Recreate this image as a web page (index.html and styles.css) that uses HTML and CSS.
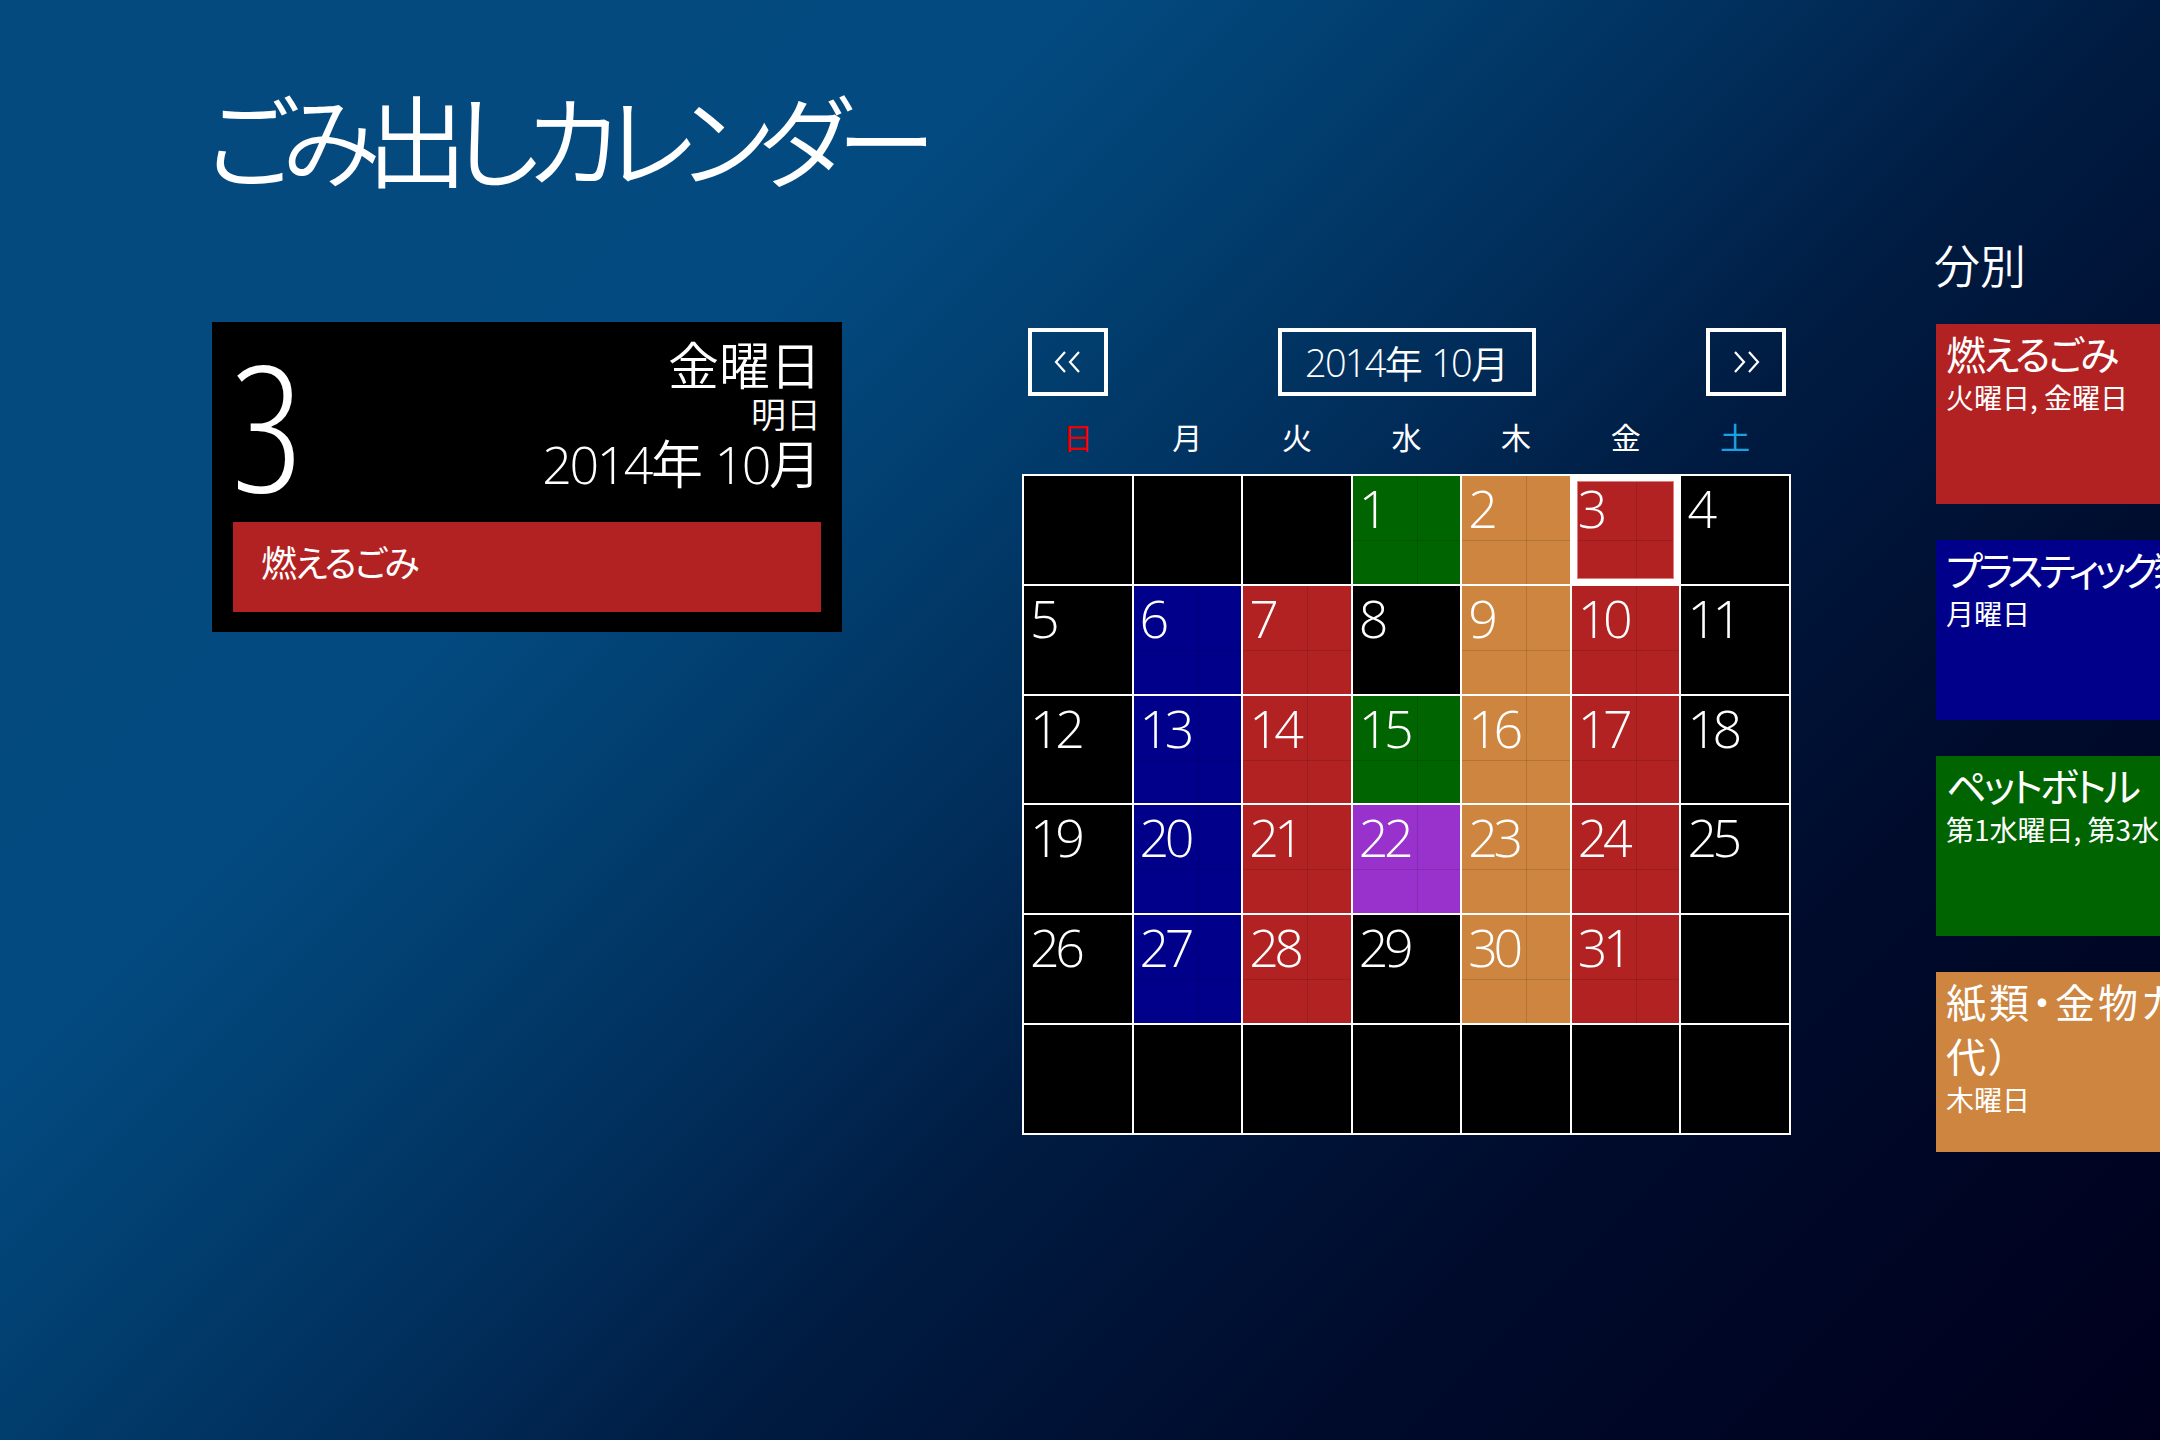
FILE: index.html
```html
<!DOCTYPE html>
<html lang="ja">
<head>
<meta charset="utf-8">
<title>ごみ出しカレンダー</title>
<link rel="stylesheet" href="styles.css">
</head>
<body>
<div class="page">
  <h1 class="title">ごみ出しカレンダー</h1>
  <div class="content">
    <section class="today-card">
      <div class="today-top">
        <div class="today-day">3</div>
        <div class="today-info">
          <div class="today-weekday">金曜日</div>
          <div class="today-rel">明日</div>
          <div class="today-month"><span class="num">2014</span>年 <span class="num">10</span>月</div>
        </div>
      </div>
      <div class="today-type red">燃えるごみ</div>
    </section>

    <section class="calendar">
      <div class="cal-nav">
        <button class="nav-btn" type="button" aria-label="前の月">
          <svg width="28" height="22" viewBox="0 0 28 22"><polyline points="11,1 2,11 11,21" /><polyline points="25,1 16,11 25,21" /></svg>
        </button>
        <button class="month-btn" type="button"><span class="num">2014</span>年 <span class="num">10</span>月</button>
        <button class="nav-btn" type="button" aria-label="次の月">
          <svg width="28" height="22" viewBox="0 0 28 22"><polyline points="3,1 12,11 3,21" /><polyline points="17,1 26,11 17,21" /></svg>
        </button>
      </div>
      <div class="weekdays">
        <span class="sun">日</span><span>月</span><span>火</span><span>水</span><span>木</span><span>金</span><span class="sat">土</span>
      </div>
      <div class="grid">
        <div class="cell"></div><div class="cell"></div><div class="cell"></div><div class="cell green">1</div><div class="cell orange">2</div><div class="cell red today">3</div><div class="cell">4</div>
        <div class="cell">5</div><div class="cell blue">6</div><div class="cell red">7</div><div class="cell">8</div><div class="cell orange">9</div><div class="cell red">10</div><div class="cell">11</div>
        <div class="cell">12</div><div class="cell blue">13</div><div class="cell red">14</div><div class="cell green">15</div><div class="cell orange">16</div><div class="cell red">17</div><div class="cell">18</div>
        <div class="cell">19</div><div class="cell blue">20</div><div class="cell red">21</div><div class="cell purple">22</div><div class="cell orange">23</div><div class="cell red">24</div><div class="cell">25</div>
        <div class="cell">26</div><div class="cell blue">27</div><div class="cell red">28</div><div class="cell">29</div><div class="cell orange">30</div><div class="cell red">31</div><div class="cell"></div>
        <div class="cell"></div><div class="cell"></div><div class="cell"></div><div class="cell"></div><div class="cell"></div><div class="cell"></div><div class="cell"></div>
      </div>
    </section>

    <section class="legend">
      <h2 class="legend-title">分別</h2>
      <div class="tile red">
        <div class="tile-title">燃えるごみ</div>
        <div class="tile-sub">火曜日, 金曜日</div>
      </div>
      <div class="tile blue">
        <div class="tile-title tight">プラスティック類</div>
        <div class="tile-sub">月曜日</div>
      </div>
      <div class="tile green">
        <div class="tile-title">ペットボトル</div>
        <div class="tile-sub">第1水曜日, 第3水曜日</div>
      </div>
      <div class="tile orange">
        <div class="tile-title wide">紙類・金物カン（資源ごみ交<br>代）</div>
        <div class="tile-sub">木曜日</div>
      </div>
    </section>
  </div>
</div>
</body>
</html>
```

FILE: styles.css
```css
* {
  box-sizing: border-box;
}

html,
body {
  margin: 0;
  padding: 0;
}

body {
  width: 2160px;
  height: 1440px;
  overflow: hidden;
  color: #fff;
  font-family: "Noto Sans CJK JP", sans-serif;
  background: linear-gradient(135deg,
    #054a7e 0%,
    #034a80 30%,
    #013d6d 40%,
    #012d5a 50%,
    #001b41 60%,
    #000b2c 76%,
    #00001c 100%);
}

.page {
  padding: 87px 0 0 212px;
}

.title {
  margin: 0 0 53px -6px;
  font-size: 100px;
  line-height: 100px;
  font-weight: 350;
  font-feature-settings: "palt";
  letter-spacing: -12.5px;
  white-space: nowrap;
}

.content {
  display: flex;
  align-items: flex-start;
}

/* numbers: thin digits */
.num,
.today-day,
.cell {
  font-family: "Open Sans", "Noto Sans", "Noto Sans CJK JP", sans-serif;
  font-weight: 300;
}

/* ---------- today card ---------- */
.today-card {
  flex: none;
  width: 630px;
  height: 310px;
  margin-top: 82px;
  padding: 21px 21px 20px;
  background: #000;
  display: flex;
  flex-direction: column;
}

.today-top {
  display: flex;
  justify-content: space-between;
  align-items: flex-start;
  height: 179px;
}

.today-day {
  font-size: 175px;
  font-stretch: 75%;
  line-height: 1;
  margin: -6px 0 0 -2px;
}

.today-info {
  text-align: right;
  font-weight: 350;
}

.today-weekday {
  font-size: 51px;
  line-height: 1;
  margin-top: -5px;
}

.today-rel {
  font-size: 35px;
  line-height: 1;
  margin-top: 6px;
}

.today-month {
  font-size: 52px;
  line-height: 1;
  margin-top: 6px;
  white-space: nowrap;
}

.today-month .num {
  letter-spacing: -2.5px;
}

.today-type {
  height: 90px;
  padding: 21px 28px;
  font-size: 36px;
  line-height: 1;
  letter-spacing: -2px;
  font-feature-settings: "palt";
}

/* ---------- calendar ---------- */
.calendar {
  flex: none;
  width: 769px;
  margin: 88px 0 0 180px;
}

.cal-nav {
  display: flex;
  justify-content: space-between;
  height: 68px;
  padding: 0 5px 0 6px;
}

.nav-btn,
.month-btn {
  display: flex;
  align-items: center;
  justify-content: center;
  height: 68px;
  padding: 0;
  border: 4px solid #fff;
  background: transparent;
  color: #fff;
  font-family: "Noto Sans CJK JP", sans-serif;
  font-weight: 350;
}

.nav-btn {
  width: 80px;
}

.nav-btn svg polyline {
  fill: none;
  stroke: #fff;
  stroke-width: 2.2;
}

.month-btn {
  width: 258px;
  font-size: 38px;
  line-height: 1;
  white-space: pre;
}

.month-btn .num {
  letter-spacing: -1.8px;
}

.weekdays {
  display: grid;
  grid-template-columns: repeat(7, 1fr);
  column-gap: 2px;
  padding: 0 2px;
  margin: 25px 0 23px;
  font-size: 30px;
  line-height: 30px;
  text-align: center;
}

.weekdays .sun { color: #f00000; }
.weekdays .sat { color: #1ba1e2; }

.grid {
  display: grid;
  grid-template-columns: repeat(7, 1fr);
  grid-auto-rows: 107.8px;
  gap: 2px;
  padding: 2px;
  background: #fff;
}

.cell {
  background-color: #000;
  background-image:
    linear-gradient(to right, transparent 64px, rgba(0, 0, 0, 0.13) 64px, rgba(0, 0, 0, 0.13) 65px, transparent 65px),
    linear-gradient(to bottom, transparent 64px, rgba(0, 0, 0, 0.13) 64px, rgba(0, 0, 0, 0.13) 65px, transparent 65px);
  padding: 6px 0 0 6px;
  font-size: 52px;
  line-height: 1;
  letter-spacing: -4.5px;
}

.cell.today {
  box-shadow: inset 0 0 0 5px #fff, inset 0 0 0 6px rgba(240, 150, 150, 0.8);
}

/* ---------- legend ---------- */
.legend {
  flex: none;
  width: 400px;
  margin: 0 0 0 145px;
}

.legend-title {
  margin: 0 0 38px -2px;
  font-size: 46px;
  line-height: 46px;
  font-weight: 350;
}

.tile {
  height: 180px;
  margin-bottom: 36px;
  padding: 2px 10px 0;
}

.tile-title {
  font-size: 40px;
  line-height: 54px;
  letter-spacing: -3px;
  font-feature-settings: "palt";
  white-space: nowrap;
}

.tile-title.tight {
  letter-spacing: -4.5px;
}

.tile-title.wide {
  letter-spacing: 3px;
}

.tile-sub {
  font-size: 28px;
  line-height: 34px;
  font-feature-settings: "palt";
  white-space: nowrap;
}

/* ---------- colours (after .cell so they win) ---------- */
.red { background-color: #b22222; }
.blue { background-color: #00008b; }
.green { background-color: #006400; }
.orange { background-color: #cd853f; }
.purple { background-color: #9932cc; }
```
